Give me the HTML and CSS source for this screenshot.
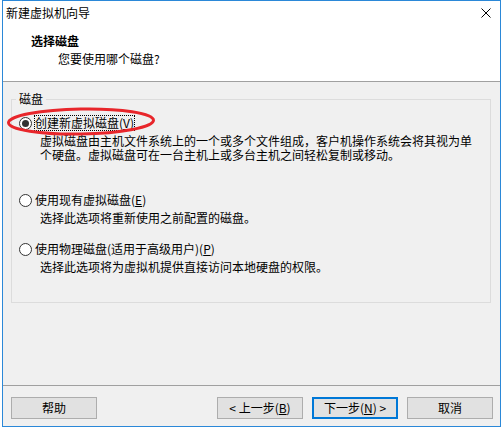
FILE: index.html
```html
<!DOCTYPE html>
<html lang="zh-CN">
<head>
<meta charset="utf-8">
<title>新建虚拟机向导</title>
<link rel="stylesheet" href="styles.css">
</head>
<body>
<div class="window">
  <div class="top">
    <div class="titlebar">
      <span class="title">新建虚拟机向导</span>
      <svg class="close" width="10" height="10" viewBox="0 0 10 10"><path d="M0.5 0.5 L9.5 9.5 M9.5 0.5 L0.5 9.5" stroke="#000" stroke-width="1" fill="none"/></svg>
    </div>
    <div class="header">
      <div class="h-title">选择磁盘</div>
      <div class="h-sub">您要使用哪个磁盘?</div>
    </div>
  </div>
  <div class="body">
    <fieldset class="group">
      <legend>磁盘</legend>
      <div class="option">
        <div class="row">
          <span class="radio checked"></span><span class="label focus">创建新虚拟磁盘(<u>V</u>)</span>
          <svg class="annot" width="152" height="30" viewBox="0 0 152 30"><ellipse cx="75" cy="14.5" rx="72.5" ry="12.5" fill="none" stroke="#e8262b" stroke-width="3" transform="rotate(-1 75 14.5)"/></svg>
        </div>
        <div class="desc tall">虚拟磁盘由主机文件系统上的一个或多个文件组成，客户机操作系统会将其视为单<br>个硬盘。虚拟磁盘可在一台主机上或多台主机之间轻松复制或移动。</div>
      </div>
      <div class="option">
        <div class="row">
          <span class="radio"></span><span class="label">使用现有虚拟磁盘(<u>E</u>)</span>
        </div>
        <div class="desc">选择此选项将重新使用之前配置的磁盘。</div>
      </div>
      <div class="option">
        <div class="row">
          <span class="radio"></span><span class="label">使用物理磁盘(适用于高级用户)(<u>P</u>)</span>
        </div>
        <div class="desc">选择此选项将为虚拟机提供直接访问本地硬盘的权限。</div>
      </div>
    </fieldset>
  </div>
  <div class="footer">
    <button class="btn">帮助</button>
    <div class="spacer"></div>
    <button class="btn">&lt; 上一步(<u>B</u>)</button>
    <button class="btn default">下一步(<u>N</u>) &gt;</button>
    <button class="btn">取消</button>
  </div>
</div>
</body>
</html>
```
FILE: styles.css
```css
* { box-sizing: border-box; }
html, body { margin: 0; padding: 0; background: #fff; }
body {
  font-family: "Noto Sans CJK SC", "Noto Sans", sans-serif;
  font-size: 12px;
  line-height: 16px;
  color: #000;
}
.window {
  margin-left: 2px;
  width: 499px;
  height: 427px;
  border: 1px solid #2b88d8;
  display: flex;
  flex-direction: column;
  background: #f0f0f0;
}
.top {
  background: #fff;
  border-bottom: 1px solid #a0a0a0;
  height: 81px;
}
.titlebar {
  height: 29px;
  display: flex;
  justify-content: space-between;
  align-items: flex-start;
  padding: 4px 0 0 3px;
}
.close { margin: 3px 9px 0 0; }
.header { padding: 3px 0 0 28px; }
.h-title { font-weight: bold; }
.h-sub { margin: 2px 0 0 27px; }
.body {
  padding-top: 9px;
  border-bottom: 1px solid #a0a0a0;
  height: 304px;
}
.group {
  margin: 0 9px 0 8px;
  padding: 8px 4px 28px 4px;
  border: 1px solid #dcdcdc;
  min-width: 0;
}
.group legend {
  padding: 0 3px;
  line-height: 16px;
}
.option { padding-left: 3px; }
.option + .option { margin-top: 16px; }
.row {
  position: relative;
  display: flex;
  align-items: center;
  height: 16px;
  gap: 2px;
}
.radio {
  width: 13px;
  height: 13px;
  border: 1px solid #333;
  border-radius: 50%;
  background: #fff;
  display: flex;
  align-items: center;
  justify-content: center;
  flex: none;
}
.radio.checked::after {
  content: "";
  width: 7px;
  height: 7px;
  border-radius: 50%;
  background: #333;
}
.label {
  line-height: 14px;
  border: 1px dotted transparent;
  white-space: nowrap;
}
.label.focus { border-color: #000; }
.annot {
  position: absolute;
  left: -13px;
  top: -8px;
  overflow: visible;
  pointer-events: none;
}
.desc {
  margin: 3px 0 0 21px;
  line-height: 14px;
  white-space: nowrap;
}
.desc.tall { min-height: 42px; }
.footer {
  flex: 1;
  display: flex;
  align-items: flex-start;
  padding: 11px 7px 0 8px;
  gap: 9px;
}
.spacer { flex: 1; }
.btn {
  width: 86px;
  height: 22px;
  padding: 0;
  background: #e1e1e1;
  border: 1px solid #adadad;
  font-family: inherit;
  font-size: 12px;
  line-height: 16px;
  color: #000;
}
.btn.default { border: 2px solid #0078d7; }
```
